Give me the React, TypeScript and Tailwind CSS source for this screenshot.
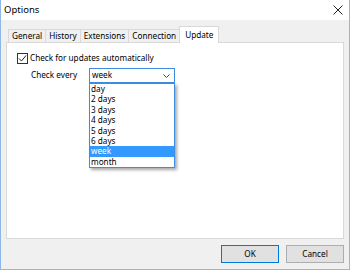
import React from 'react';

const tabs = ['General', 'History', 'Extensions', 'Connection', 'Update'];
const options = ['day', '2 days', '3 days', '4 days', '5 days', '6 days', 'week', 'month'];

const App: React.FC = () => {
  return (
    <div
      className="w-[350px] h-[270px] flex flex-col bg-[#f0f0f0] border-x border-b border-[#8cb7e6] text-[8.2px] text-black overflow-hidden"
      style={{ fontFamily: '"Noto Sans", "Open Sans", sans-serif' }}
    >
      {/* Title bar */}
      <div className="h-[20px] bg-white flex items-center justify-between pl-[3px] pr-[5px] shrink-0">
        <span className="text-[9.5px] leading-none">Options</span>
        <svg width="10" height="10" viewBox="0 0 10 10" className="mr-[1px]">
          <path d="M0.5 0.5 L9.5 9.5 M9.5 0.5 L0.5 9.5" stroke="#222" strokeWidth="1" />
        </svg>
      </div>

      <div className="flex-1 flex flex-col px-[5px] pt-[6px]">
        {/* Tabs */}
        <div className="flex items-end pl-[2px] h-[16px] relative z-10">
          {tabs.map((t) =>
            t === 'Update' ? (
              <div
                key={t}
                className="h-[17px] -mb-px px-[5px] bg-white border border-b-0 border-[#d9d9d9] flex items-center leading-none"
              >
                {t}
              </div>
            ) : (
              <div
                key={t}
                className="h-[13px] px-[3px] bg-[#f0f0f0] border border-r-0 border-b-0 border-[#d9d9d9] flex items-center leading-none"
              >
                {t}
              </div>
            )
          )}
        </div>

        {/* Panel */}
        <div className="h-[197px] bg-white border border-[#d9d9d9] relative">
          <div className="pl-[10px] pt-[10px] flex flex-col">
            <div className="flex items-center gap-[2px]">
              <div className="w-[11px] h-[11px] border border-[#333] bg-white flex items-center justify-center">
                <svg width="9" height="9" viewBox="0 0 9 9">
                  <path d="M1 4.5 L3.5 7 L8 1.5" stroke="#222" strokeWidth="1" fill="none" />
                </svg>
              </div>
              <span className="leading-none">Check for updates automatically</span>
            </div>

            <div className="flex items-center mt-[4px] pl-[14px]">
              <span className="w-[58px] leading-none">Check every</span>
              <div className="relative">
                <div className="w-[86px] h-[15px] border border-[#3d8ee0] bg-white flex items-center justify-between pl-[2px] pr-[4px]">
                  <span className="leading-none">week</span>
                  <svg width="7" height="4" viewBox="0 0 7 4">
                    <path d="M0.5 0.5 L3.5 3.5 L6.5 0.5" stroke="#444" strokeWidth="1" fill="none" />
                  </svg>
                </div>
                {/* Dropdown list */}
                <div className="absolute left-0 top-[15px] w-[86px] bg-white border border-[#3d8ee0] flex flex-col shadow-[2px_2px_3px_rgba(0,0,0,0.35)]">
                  {options.map((o) => (
                    <div
                      key={o}
                      className={
                        o === 'week'
                          ? 'h-[10.4px] leading-[10.4px] pl-[1px] bg-[#3399ff] text-white'
                          : 'h-[10.4px] leading-[10.4px] pl-[1px]'
                      }
                    >
                      {o}
                    </div>
                  ))}
                </div>
              </div>
            </div>
          </div>
        </div>

        {/* Buttons */}
        <div className="flex justify-end gap-[7px] mt-[6px]">
          <button className="w-[58px] h-[18px] border border-[#0078d7] bg-[#e1e1e1] flex items-center justify-center leading-none text-[8.2px]">
            OK
          </button>
          <button className="w-[58px] h-[18px] border border-[#adadad] bg-[#e1e1e1] flex items-center justify-center leading-none text-[8.2px]">
            Cancel
          </button>
        </div>
      </div>
    </div>
  );
};

export default App;
